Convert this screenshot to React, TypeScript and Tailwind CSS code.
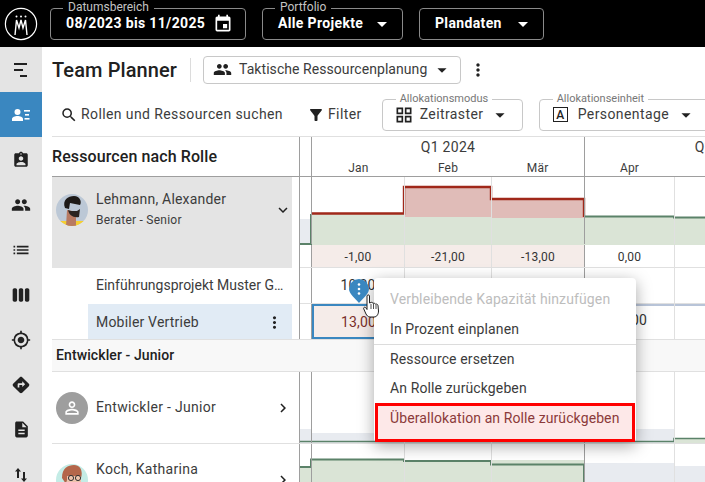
import type { ReactNode } from 'react';
import {
  MdArrowDropDown,
  MdAssignmentInd,
  MdChevronRight,
  MdDescription,
  MdDirections,
  MdEvent,
  MdExpandMore,
  MdFilterAlt,
  MdGpsFixed,
  MdGridView,
  MdList,
  MdMoreVert,
  MdPeople,
  MdPersonOutline,
  MdSearch,
  MdViewWeek,
} from 'react-icons/md';

const GREEN = '#5b8269';
const GREEN_FILL = '#dae4d6';
const RED = '#a0281a';
const RED_FILL = '#e0bcb8';
const SLATE = '#e8ebf0';

const Logo = () => (
  <svg width="34" height="34" viewBox="0 0 34 34" fill="none" stroke="#fff">
    <circle cx="17" cy="17" r="15.6" strokeWidth="1.2" />
    <path d="M11 28 L12.5 13 L15 21 L17 13 L19 21 L21.5 13 L23 28" strokeWidth="1.4" />
    <circle cx="12.5" cy="9.5" r="1" fill="#fff" stroke="none" />
    <circle cx="17" cy="9.5" r="1" fill="#fff" stroke="none" />
    <circle cx="21.5" cy="9.5" r="1" fill="#fff" stroke="none" />
  </svg>
);

const HeaderBox = ({ label, width, children }: { label?: string; width: string; children: ReactNode }) => (
  <div className={`relative h-[32px] ${width} rounded border border-[#8a8a8a] flex items-center`}>
    {label && (
      <span className="absolute -top-[9px] left-[12px] bg-black px-[5px] text-[12px] leading-[14px] text-[#c4c4c4]">
        {label}
      </span>
    )}
    {children}
  </div>
);

const TopBar = () => (
  <div className="h-[47px] bg-black flex items-center shrink-0 pl-[4px]">
    <Logo />
    <div className="ml-[12px] flex items-center gap-[16px]">
      <HeaderBox label="Datumsbereich" width="w-[196px]">
        <span className="ml-[15px] text-[14px] font-bold tracking-[0.35px] text-white">08/2023 bis 11/2025</span>
        <MdEvent className="ml-[8px] text-white" size={20} />
      </HeaderBox>
      <HeaderBox label="Portfolio" width="w-[141px]">
        <span className="ml-[15px] text-[14px] font-bold tracking-[0.35px] text-white">Alle Projekte</span>
        <MdArrowDropDown className="ml-[7px] text-white" size={24} />
      </HeaderBox>
      <HeaderBox width="w-[125px]">
        <span className="ml-[15px] text-[14px] font-bold tracking-[0.35px] text-white">Plandaten</span>
        <MdArrowDropDown className="ml-[9px] text-white" size={24} />
      </HeaderBox>
    </div>
  </div>
);

const CollapseIcon = () => (
  <svg width="16" height="14" viewBox="0 0 16 14" fill="#212121">
    <rect x="1" y="0" width="13" height="2" />
    <rect x="1" y="6" width="9" height="2" />
    <rect x="7" y="12" width="7" height="2" />
  </svg>
);

const PlannerIcon = () => (
  <svg width="18" height="12" viewBox="0 0 18 12" fill="#fff">
    <circle cx="5.5" cy="3" r="3" />
    <path d="M0 12 V10 C0 8 3 7 5.5 7 C8 7 11 8 11 10 V12 Z" />
    <rect x="12" y="1" width="6" height="1.6" />
    <rect x="13" y="5" width="4" height="1.6" />
    <rect x="12.5" y="9" width="5" height="1.6" />
  </svg>
);

const SwapIcon = () => (
  <svg width="12" height="14" viewBox="0 0 12 14" fill="#212121">
    <path d="M3 0 L6 3.5 H4 V10 H2 V3.5 H0 Z" />
    <path d="M9 14 L12 10.5 H10 V4 H8 V10.5 H6 Z" />
  </svg>
);

const SideItem = ({ children, active }: { children: ReactNode; active?: boolean }) => (
  <div className={`h-[45px] flex items-center justify-center ${active ? 'bg-[#3a87c0]' : ''}`}>{children}</div>
);

const Sidebar = () => (
  <div className="w-[42px] shrink-0 bg-[#e4e4e4] text-[#212121]">
    <SideItem><CollapseIcon /></SideItem>
    <SideItem active><PlannerIcon /></SideItem>
    <SideItem><MdAssignmentInd size={18} /></SideItem>
    <SideItem><MdPeople size={20} /></SideItem>
    <SideItem><MdList size={20} /></SideItem>
    <SideItem><MdViewWeek size={20} /></SideItem>
    <SideItem><MdGpsFixed size={20} /></SideItem>
    <SideItem><MdDirections size={20} /></SideItem>
    <SideItem><MdDescription size={19} /></SideItem>
    <SideItem><SwapIcon /></SideItem>
  </div>
);

const TitleRow = () => (
  <div className="h-[45px] flex items-center pl-[10px] shrink-0">
    <h1 className="text-[20px] font-medium tracking-[0.1px] text-[#212121]">Team Planner</h1>
    <div className="ml-[13px] h-[24px] w-px bg-[#dcdcdc]" />
    <div className="ml-[12px] h-[28px] w-[258px] rounded border border-[#c8c8c8] flex items-center pl-[9px] text-[#3c3c3c]">
      <MdPeople size={19} className="shrink-0 text-[#212121]" />
      <span className="ml-[7px] text-[14px] tracking-[0.06px] whitespace-nowrap">Taktische Ressourcenplanung</span>
      <MdArrowDropDown size={22} className="shrink-0 ml-[4px] text-[#212121]" />
    </div>
    <MdMoreVert size={20} className="shrink-0 ml-[7px] text-[#212121]" />
  </div>
);

const Outlined = ({ label, width, icon, text, textGap }: { label: string; width: string; icon: ReactNode; text: string; textGap: string }) => (
  <div className={`relative h-[32px] ${width} shrink-0 rounded border border-[#c8c8c8] flex items-center pl-[13px] text-[#3c3c3c]`}>
    <span className="absolute -top-[8px] left-[13px] bg-white px-[4px] text-[11px] leading-[13px] text-[#777]">{label}</span>
    {icon}
    <span className={`${textGap} text-[14px] tracking-[0.4px] whitespace-nowrap`}>{text}</span>
    <MdArrowDropDown size={22} className="shrink-0 ml-[6px] text-[#212121]" />
  </div>
);

const LetterIcon = () => (
  <span className="h-[15px] w-[15px] shrink-0 border-[1.5px] border-[#212121] flex items-center justify-center text-[12px] font-medium leading-none text-[#212121]">
    A
  </span>
);

const Toolbar = () => (
  <div className="h-[44px] flex items-center pl-[18px] pt-[1px] shrink-0 text-[#3c3c3c]">
    <MdSearch size={18} className="shrink-0 text-[#212121]" />
    <span className="ml-[3px] text-[14px] tracking-[0.4px] whitespace-nowrap">Rollen und Ressourcen suchen</span>
    <MdFilterAlt size={18} className="shrink-0 ml-[24px] text-[#212121]" />
    <span className="ml-[3px] text-[14px] tracking-[0.4px]">Filter</span>
    <div className="ml-[20px] flex items-center gap-[16px] shrink-0">
      <Outlined
        label="Allokationsmodus"
        width="w-[141px]"
        icon={<MdGridView size={20} className="shrink-0 -ml-[2px] text-[#212121]" />}
        text="Zeitraster"
        textGap="ml-[6px]"
      />
      <Outlined label="Allokationseinheit" width="w-[180px]" icon={<LetterIcon />} text="Personentage" textGap="ml-[10px]" />
    </div>
  </div>
);

// stub, Jan, Feb, Mär, Apr, Mai, Jun
const columns = [
  'w-[12px] border-r border-[#9e9e9e]',
  'w-[93px] border-r border-[#e0e0e0]',
  'w-[87px] border-r border-[#e0e0e0]',
  'w-[93px] border-r border-[#9e9e9e]',
  'w-[90px] border-r border-[#e0e0e0]',
  'w-[90px] border-r border-[#e0e0e0]',
  'w-[90px]',
];

const Cells = ({ values = [], className = '', tint = [] }: { values?: string[]; className?: string; tint?: number[] }) => (
  <div className={`relative flex h-full ${className}`}>
    {columns.map((col, i) => (
      <div
        key={col + i}
        className={`${col} shrink-0 h-full flex justify-center pt-[7px] text-[12px] leading-[16px] tracking-[0.2px] text-[#333] ${tint.includes(i) ? 'bg-[#f5ece9]' : ''}`}
      >
        {values[i]}
      </div>
    ))}
  </div>
);

const Chart = ({ height, children }: { height: number; children: ReactNode }) => (
  <svg className="absolute inset-0" width="405" height={height} viewBox={`0 0 405 ${height}`}>
    {children}
  </svg>
);

const LehmannAvatar = () => (
  <svg width="32" height="32" viewBox="0 0 32 32" className="shrink-0">
    <clipPath id="a1"><circle cx="16" cy="16" r="16" /></clipPath>
    <g clipPath="url(#a1)">
      <rect width="32" height="32" fill="#bcc8d6" />
      <rect x="3" y="27" width="26" height="6" fill="#f6cf2f" />
      <path d="M11 16 L10 32 H20 L20 22 L22 18 Z" fill="#b87a62" />
      <path d="M9 14 C6 6 12 2 18 2 C24 2 26 8 24 11 L14 9 L13 15 Z" fill="#1e1a18" />
      <path d="M12 16 C13 21 17 24 23 23 L24 15 L21 17 L15 17 Z" fill="#2a2320" />
    </g>
  </svg>
);

const KochAvatar = () => (
  <svg width="32" height="32" viewBox="0 0 32 32" className="shrink-0">
    <clipPath id="a2"><circle cx="16" cy="16" r="16" /></clipPath>
    <g clipPath="url(#a2)">
      <rect width="32" height="32" fill="#c4ece6" />
      <path d="M6 14 C6 4 12 1 18 1 C25 1 27 8 25 14 L12 12 L10 20 Z" fill="#b4664a" />
      <path d="M11 12 H25 V24 H11 Z" fill="#eec3ac" />
      <circle cx="15" cy="14" r="2.6" fill="none" stroke="#333" strokeWidth="1" />
      <circle cx="22" cy="14" r="2.6" fill="none" stroke="#333" strokeWidth="1" />
    </g>
  </svg>
);

const Grid = () => (
  <div className="ml-[10px] border-t border-[#e0e0e0] text-[#3c3c3c] w-[653px]">
    {/* header */}
    <div className="flex h-[40px]">
      <div className="w-[248px] shrink-0 border-r border-b border-[#9e9e9e] flex items-center pt-[1px] text-[16px] font-medium text-[#212121] tracking-[0.1px]">
        Ressourcen nach Rolle
      </div>
      <div className="flex-1 border-b border-[#9e9e9e] flex">
        <div className="w-[12px] shrink-0 border-r border-[#9e9e9e]" />
        <div className="w-[273px] shrink-0 border-r border-[#9e9e9e] flex flex-col">
          <div className="h-[20px] flex items-center justify-center text-[14px] tracking-[0.3px] pt-[1px]">Q1 2024</div>
          <div className="flex text-[12px] tracking-[0.2px] pt-[2px]">
            <span className="w-[93px] text-center">Jan</span>
            <span className="w-[87px] text-center">Feb</span>
            <span className="w-[93px] text-center">Mär</span>
          </div>
        </div>
        <div className="flex-1 flex flex-col">
          <div className="h-[20px] flex items-center justify-center text-[14px] tracking-[0.3px] pt-[1px] pl-[4px] w-[270px] whitespace-nowrap">Q2 2024</div>
          <div className="flex text-[12px] tracking-[0.2px] pt-[2px]">
            <span className="w-[89px] text-center">Apr</span>
          </div>
        </div>
      </div>
    </div>

    {/* Lehmann */}
    <div className="flex h-[91px]">
      <div className="w-[248px] shrink-0 border-r border-[#9e9e9e] pr-[7px]">
        <div className="h-full bg-[#e4e4e4] flex items-start pl-[4px] pt-[17px]">
          <LehmannAvatar />
          <div className="ml-[8px] flex-1 -mt-[3px]">
            <div className="text-[14px] leading-[16px] tracking-[0.2px]">Lehmann, Alexander</div>
            <div className="text-[12px] leading-[14px] tracking-[0.25px] mt-[6px]">Berater - Senior</div>
          </div>
          <MdExpandMore size={18} className="shrink-0 mt-[7px] text-[#212121]" />
        </div>
      </div>
      <div className="flex-1 flex flex-col">
        <div className="relative h-[68px] border-b border-[#e0e0e0]">
          <Chart height={68}>
            <rect x="0" y="42" width="11" height="25" fill={SLATE} />
            <rect x="12" y="37" width="272" height="31" fill={GREEN_FILL} />
            <rect x="284" y="40" width="121" height="28" fill={GREEN_FILL} />
            <rect x="104" y="10" width="87" height="30" fill={RED_FILL} />
            <rect x="191" y="22" width="93" height="19" fill={RED_FILL} />
            <path d="M0 67 H11 V37" fill="none" stroke={GREEN} strokeWidth="2" />
            <path d="M11 36.5 H104 V10 H191 V22 H284 V40" fill="none" stroke={RED} strokeWidth="2.4" />
            <path d="M284 39.5 H374 V40.5 H405" fill="none" stroke={GREEN} strokeWidth="2" />
          </Chart>
          <Cells />
        </div>
        <div className="h-[23px] border-b border-[#e0e0e0]">
          <Cells values={['', '-1,00', '-21,00', '-13,00', '0,00']} tint={[1, 2, 3]} className="[&>div]:pt-[4px]" />
        </div>
      </div>
    </div>

    {/* Einführungsprojekt */}
    <div className="flex h-[36px]">
      <div className="w-[248px] shrink-0 border-r border-[#9e9e9e] pl-[44px] pr-[10px] pt-[9px]">
        <div className="truncate text-[14px] leading-[16px]">Einführungsprojekt Muster GmbH</div>
      </div>
      <div className="flex-1 border-b border-[#e0e0e0]">
        <Cells values={['', '10,00']} className="[&>div]:text-[14px] [&>div]:pt-[9px]" />
      </div>
    </div>

    {/* Mobiler Vertrieb */}
    <div className="flex h-[36px] border-b border-[#e0e0e0]">
      <div className="w-[248px] shrink-0 border-r border-[#9e9e9e] pl-[36px] pr-[7px]">
        <div className="h-full bg-[#e1ebf5] flex items-center pl-[8px] pt-[1px] justify-between">
          <span className="text-[14px] tracking-[0.2px]">Mobiler Vertrieb</span>
          <MdMoreVert size={19} className="shrink-0 mr-[8px] text-[#212121]" />
        </div>
      </div>
      <div className="flex-1 relative">
        <div className="absolute left-[285px] right-0 top-0 h-[2px] bg-[#b8c4d8]" />
        <Cells values={['', '13,00', '', '', '13,00', '', '13,00']} tint={[1]} className="[&>div]:text-[14px] [&>div]:pt-[8px] [&>div:nth-child(2)]:border-2 [&>div:nth-child(2)]:border-[#3a87c0] [&>div:nth-child(2)]:text-[#7a2f2a]" />
      </div>
    </div>

    {/* group */}
    <div className="h-[32px] bg-[#f8f8f8] border-b border-[#e0e0e0] flex items-center pl-[4px] pb-[1px] text-[14px] font-medium tracking-[0.1px] text-[#212121]">
      Entwickler - Junior
    </div>

    {/* Entwickler */}
    <div className="flex h-[72px] border-b border-[#e0e0e0]">
      <div className="w-[248px] shrink-0 border-r border-[#9e9e9e] flex items-center pl-[4px] pr-[7px]">
        <div className="h-[32px] w-[32px] shrink-0 rounded-full bg-[#9e9e9e] flex items-center justify-center">
          <MdPersonOutline size={20} className="text-white" />
        </div>
        <span className="ml-[8px] flex-1 text-[14px] tracking-[0.3px]">Entwickler - Junior</span>
        <MdChevronRight size={18} className="shrink-0 text-[#212121]" />
      </div>
      <div className="flex-1 relative">
        <Chart height={71}>
          <rect x="0" y="57" width="11" height="14" fill={SLATE} />
          <rect x="12" y="61" width="362" height="10" fill={SLATE} />
          <rect x="284" y="57" width="90" height="12" fill={SLATE} />
          <rect x="374" y="66" width="31" height="5" fill={GREEN_FILL} />
          <path d="M0 69.5 H374 V66.5 H405" fill="none" stroke={GREEN} strokeWidth="1.6" />
        </Chart>
        <Cells />
      </div>
    </div>

    {/* Koch */}
    <div className="flex h-[60px]">
      <div className="w-[248px] shrink-0 border-r border-[#9e9e9e] flex items-start pl-[4px] pr-[7px] pt-[20px]">
        <KochAvatar />
        <span className="ml-[8px] flex-1 text-[14px] leading-[16px] tracking-[0.3px] -mt-[3px]">Koch, Katharina</span>
        <MdChevronRight size={18} className="shrink-0 mt-[7px] text-[#212121]" />
      </div>
      <div className="flex-1 relative">
        <Chart height={60}>
          <rect x="0" y="23" width="11" height="37" fill={GREEN_FILL} />
          <rect x="12" y="16" width="272" height="44" fill={GREEN_FILL} />
          <rect x="285" y="19" width="90" height="41" fill={SLATE} />
          <rect x="375" y="22" width="30" height="38" fill={SLATE} />
          <path d="M0 23 H11 V15.5 H104 V17 H191 V20.5 H284 V60" fill="none" stroke={GREEN} strokeWidth="2" />
        </Chart>
        <Cells />
      </div>
    </div>
  </div>
);

const MenuItem = ({ children, muted }: { children: ReactNode; muted?: boolean }) => (
  <div className={`h-[29px] flex items-center pl-[16px] text-[14px] tracking-[0.12px] ${muted ? 'text-[#bdbdbd]' : 'text-[#3c3c3c]'}`}>
    {children}
  </div>
);

const Menu = () => (
  <div className="absolute left-[374px] top-[278px] w-[262px] h-[164px] rounded bg-white pt-[7px] shadow-[0_4px_16px_rgba(0,0,0,0.35)]">
    <MenuItem muted>Verbleibende Kapazität hinzufügen</MenuItem>
    <MenuItem><span className="pt-[1px]">In Prozent einplanen</span></MenuItem>
    <div className="h-px bg-[#dcdcdc] mt-[1px]" />
    <MenuItem>Ressource ersetzen</MenuItem>
    <MenuItem>An Rolle zurückgeben</MenuItem>
    <div className="mx-px h-[39px] border-[3px] border-[#ff0000] bg-[#fde8e8] pl-[12px] text-[14px] leading-[24px] tracking-[0.1px] text-[#8b3a3a]">
      Überallokation an Rolle zurückgeben
    </div>
  </div>
);

const Pin = () => (
  <svg className="absolute left-[349px] top-[279px]" width="20" height="24" viewBox="0 0 20 24">
    <path d="M10 0 A10 10 0 0 1 20 10 C20 15 14 19 10 24 C6 19 0 15 0 10 A10 10 0 0 1 10 0 Z" fill="#3a87c0" />
    <circle cx="10" cy="5.5" r="1.3" fill="#fff" />
    <circle cx="10" cy="10" r="1.3" fill="#fff" />
    <circle cx="10" cy="14.5" r="1.3" fill="#fff" />
  </svg>
);

const HandCursor = () => (
  <svg className="absolute left-[363px] top-[294px]" width="17" height="24" viewBox="0 0 17 24">
    <path
      d="M4 2 C4 0.5 6.5 0.5 6.5 2 V9 L8 8.5 C9 8 10 8.5 10 9.5 C11 8.8 12 9.3 12.3 10.2 C13.4 9.7 14.8 10.3 15 11.5 L15.5 17 C15.5 20 14 23 11 23 H7 C5 23 4 21.5 3 20 L0.8 15 C0 13.5 2 12.5 3 14 L4 15.5 Z"
      fill="#fff"
      stroke="#222"
      strokeWidth="1"
      strokeLinejoin="round"
    />
    <path d="M8 10 V15 M10.5 10 V15 M13 11 V15" stroke="#222" strokeWidth="0.8" fill="none" />
  </svg>
);

export default function App() {
  return (
    <div className="relative w-[705px] h-[482px] overflow-hidden bg-white flex flex-col font-['Roboto',sans-serif]">
      <TopBar />
      <div className="flex flex-1 min-h-0">
        <Sidebar />
        <div className="flex-1 min-w-0 flex flex-col overflow-hidden">
          <TitleRow />
          <Toolbar />
          <Grid />
        </div>
      </div>
      <Menu />
      <Pin />
      <HandCursor />
    </div>
  );
}
